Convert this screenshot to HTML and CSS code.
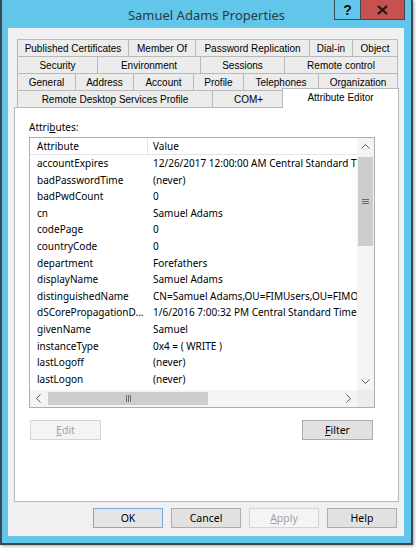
FILE: index.html
```html
<!DOCTYPE html>
<html>
<head>
<meta charset="utf-8">
<link rel="stylesheet" href="styles.css">
</head>
<body>
<div class="window">
  <div class="titlebar">
    <div class="title">Samuel Adams Properties</div>
    <div class="caption-btns">
      <div class="cbtn help">?</div>
      <div class="cbtn close"><svg width="11" height="10" viewBox="0 0 11 10"><path d="M1 1 L10 9 M10 1 L1 9" stroke="#1a1a1a" stroke-width="2.2" fill="none"/></svg></div>
    </div>
  </div>
  <div class="client">
    <div class="tabs">
      <div class="tabrow r1">
        <div class="tab">Published Certificates</div>
        <div class="tab">Member Of</div>
        <div class="tab">Password Replication</div>
        <div class="tab">Dial-in</div>
        <div class="tab last">Object</div>
      </div>
      <div class="tabrow r2">
        <div class="tab">Security</div>
        <div class="tab">Environment</div>
        <div class="tab">Sessions</div>
        <div class="tab last">Remote control</div>
      </div>
      <div class="tabrow r3">
        <div class="tab">General</div>
        <div class="tab">Address</div>
        <div class="tab">Account</div>
        <div class="tab">Profile</div>
        <div class="tab">Telephones</div>
        <div class="tab last">Organization</div>
      </div>
      <div class="tabrow r4">
        <div class="tab">Remote Desktop Services Profile</div>
        <div class="tab">COM+</div>
        <div class="tab last sel">Attribute Editor</div>
      </div>
    </div>
    <div class="panel">
      <div class="label">Attri<u>b</u>utes:</div>
      <div class="list">
        <div class="list-body">
          <div class="lv-head">
            <div class="hc c1">Attribute</div>
            <div class="hc c2">Value</div>
          </div>
          <div class="lv-row"><div class="c1">accountExpires</div><div class="c2">12/26/2017 12:00:00 AM Central Standard Time</div></div>
          <div class="lv-row"><div class="c1">badPasswordTime</div><div class="c2">(never)</div></div>
          <div class="lv-row"><div class="c1">badPwdCount</div><div class="c2">0</div></div>
          <div class="lv-row"><div class="c1">cn</div><div class="c2">Samuel Adams</div></div>
          <div class="lv-row"><div class="c1">codePage</div><div class="c2">0</div></div>
          <div class="lv-row"><div class="c1">countryCode</div><div class="c2">0</div></div>
          <div class="lv-row"><div class="c1">department</div><div class="c2">Forefathers</div></div>
          <div class="lv-row"><div class="c1">displayName</div><div class="c2">Samuel Adams</div></div>
          <div class="lv-row"><div class="c1">distinguishedName</div><div class="c2">CN=Samuel Adams,OU=FIMUsers,OU=FIMObjects,DC=contoso,DC=com</div></div>
          <div class="lv-row"><div class="c1">dSCorePropagationD...</div><div class="c2">1/6/2016 7:00:32 PM Central Standard Time</div></div>
          <div class="lv-row"><div class="c1">givenName</div><div class="c2">Samuel</div></div>
          <div class="lv-row"><div class="c1">instanceType</div><div class="c2">0x4 = ( WRITE )</div></div>
          <div class="lv-row"><div class="c1">lastLogoff</div><div class="c2">(never)</div></div>
          <div class="lv-row"><div class="c1">lastLogon</div><div class="c2">(never)</div></div>
        </div>
        <div class="vscroll">
          <div class="sbtn"><svg width="9" height="5" viewBox="0 0 9 5"><path d="M0.5 4.5 L4.5 0.5 L8.5 4.5" fill="none" stroke="#5a5a5a"/></svg></div>
          <div class="vthumb"><svg width="7" height="5" viewBox="0 0 7 5"><path d="M0 0.5 H7 M0 2.5 H7 M0 4.5 H7" stroke="#6a6a6a"/></svg></div>
          <div class="track"></div>
          <div class="sbtn"><svg width="9" height="5" viewBox="0 0 9 5"><path d="M0.5 0.5 L4.5 4.5 L8.5 0.5" fill="none" stroke="#5a5a5a"/></svg></div>
        </div>
        <div class="hscroll">
          <div class="sbtn"><svg width="5" height="9" viewBox="0 0 5 9"><path d="M4.5 0.5 L0.5 4.5 L4.5 8.5" fill="none" stroke="#5a5a5a"/></svg></div>
          <div class="hthumb"><svg width="5" height="7" viewBox="0 0 5 7"><path d="M0.5 0 V7 M2.5 0 V7 M4.5 0 V7" stroke="#6a6a6a"/></svg></div>
          <div class="track"></div>
          <div class="sbtn"><svg width="5" height="9" viewBox="0 0 5 9"><path d="M0.5 0.5 L4.5 4.5 L0.5 8.5" fill="none" stroke="#5a5a5a"/></svg></div>
        </div>
        <div class="corner"></div>
      </div>
      <div class="list-actions">
        <div class="btn disabled"><span><u>E</u>dit</span></div>
        <div class="btn"><span><u>F</u>ilter</span></div>
      </div>
    </div>
    <div class="dlg-buttons">
      <div class="btn default">OK</div>
      <div class="btn">Cancel</div>
      <div class="btn disabled"><span><u>A</u>pply</span></div>
      <div class="btn">Help</div>
    </div>
  </div>
</div>
</body>
</html>
```

FILE: styles.css
```css
* { box-sizing: border-box; }
html, body { margin: 0; padding: 0; background: #ffffff; }
body {
  width: 416px;
  height: 548px;
  overflow: hidden;
  font-family: "Noto Sans", "Liberation Sans", sans-serif;
}

.window {
  width: 413px;
  height: 545px;
  background: #62c6ea;
  border: 2px solid #3b4a52;
  border-top: 0;
  box-shadow: 1px 1px 3px rgba(0, 0, 0, 0.35);
  display: flex;
  flex-direction: column;
  padding: 0 7px 7px 6px;
}

.titlebar {
  height: 28px;
  margin: 0 -7px 0 -6px;
  position: relative;
  display: flex;
  justify-content: center;
  align-items: center;
}
.title {
  font-size: 13px;
  color: #2a3a42;
  padding-top: 1px;
}
.caption-btns {
  position: absolute;
  top: 0;
  right: 6px;
  display: flex;
}
.cbtn {
  height: 20px;
  display: flex;
  align-items: center;
  justify-content: center;
  border: 1px solid #3b4a52;
  border-top: 0;
}
.cbtn.help {
  width: 26px;
  border-right: 0;
  background: #62c6ea;
  font: bold 14px "Liberation Sans", sans-serif;
  color: #111;
}
.cbtn.close {
  width: 45px;
  background: #c75050;
}

.client {
  flex: 1;
  background: #f0f0f0;
  display: flex;
  flex-direction: column;
  padding: 11px 5px 8px 6px;
}

.tabs {
  margin: 0 1px 0 3px;
  display: flex;
  flex-direction: column;
}
.tabrow {
  display: grid;
  height: 17px;
}
.r1 { grid-template-columns: 111px 67px 114px 43px 1fr; }
.r2 { grid-template-columns: 80px 103px 84px 1fr; }
.r3 { grid-template-columns: 58px 58px 60px 50px 75px 1fr; }
.r4 { grid-template-columns: 195px 72px 1fr; }

.tab {
  background: #ececec;
  border-top: 1px solid #b9b9b9;
  border-left: 1px solid #b9b9b9;
  font: 10px "Liberation Sans", Arial, sans-serif;
  color: #000;
  display: flex;
  align-items: center;
  justify-content: center;
  white-space: nowrap;
}
.tab.last { border-right: 1px solid #b9b9b9; }
.tab.sel {
  background: #ffffff;
  margin: -2px -1px -1px -2px;
  position: relative;
  z-index: 2;
  align-items: flex-start;
  padding-top: 3px;
}

.panel {
  height: 395px;
  background: #ffffff;
  border: 1px solid #b9b9b9;
  padding: 12px 0 0 14px;
}
.label {
  font-size: 10px;
  line-height: 14px;
  color: #000;
}

.list {
  margin-top: 3px;
  width: 346px;
  height: 271px;
  border: 1px solid #abadb3;
  display: grid;
  grid-template-columns: 1fr 17px;
  grid-template-rows: 1fr 17px;
  font-size: 10px;
  color: #000;
}
.list-body {
  overflow: hidden;
  white-space: nowrap;
}
.lv-head {
  display: grid;
  grid-template-columns: 118px 1fr;
  height: 17px;
  border-bottom: 1px solid #e5e5e5;
}
.hc {
  line-height: 16px;
}
.hc.c1 { border-right: 1px solid #e5e5e5; }
.lv-row {
  display: grid;
  grid-template-columns: 118px 1fr;
  height: 16.6px;
  line-height: 16.6px;
}
.c1 { padding-left: 7px; overflow: hidden; }
.c2 { padding-left: 5px; overflow: visible; }

.vscroll {
  grid-row: 1;
  grid-column: 2;
  display: flex;
  flex-direction: column;
  background: #f4f4f4;
}
.hscroll {
  grid-row: 2;
  grid-column: 1;
  display: flex;
  background: #f4f4f4;
}
.corner {
  grid-row: 2;
  grid-column: 2;
  background: #ececec;
}
.sbtn {
  flex: none;
  width: 17px;
  height: 17px;
  display: flex;
  align-items: center;
  justify-content: center;
}
.track { flex: 1; }
.vthumb {
  flex: none;
  height: 89px;
  margin: 2px 1px 0 1px;
  background: #cdcdcd;
  display: flex;
  align-items: center;
  justify-content: center;
}
.hthumb {
  flex: none;
  width: 160px;
  margin: 2px 0 2px 1px;
  background: #cdcdcd;
  display: flex;
  align-items: center;
  justify-content: center;
}

.list-actions {
  margin: 12px 0 0 1px;
  width: 343px;
  display: flex;
  justify-content: space-between;
}

.btn {
  width: 71px;
  height: 20px;
  background: #e1e1e1;
  border: 1px solid #adadad;
  display: flex;
  align-items: center;
  justify-content: center;
  font-size: 10.5px;
  color: #000;
}
.btn.disabled {
  background: #f4f4f4;
  border-color: #d5d5d5;
  color: #a2a2a2;
}
.btn.default {
  border-color: #7aa9d6;
  background: #e5e5e5;
}

.dlg-buttons {
  margin-top: 6px;
  padding-right: 2px;
  display: flex;
  justify-content: flex-end;
  gap: 8px;
}
.dlg-buttons .btn { width: 70px; }
```
